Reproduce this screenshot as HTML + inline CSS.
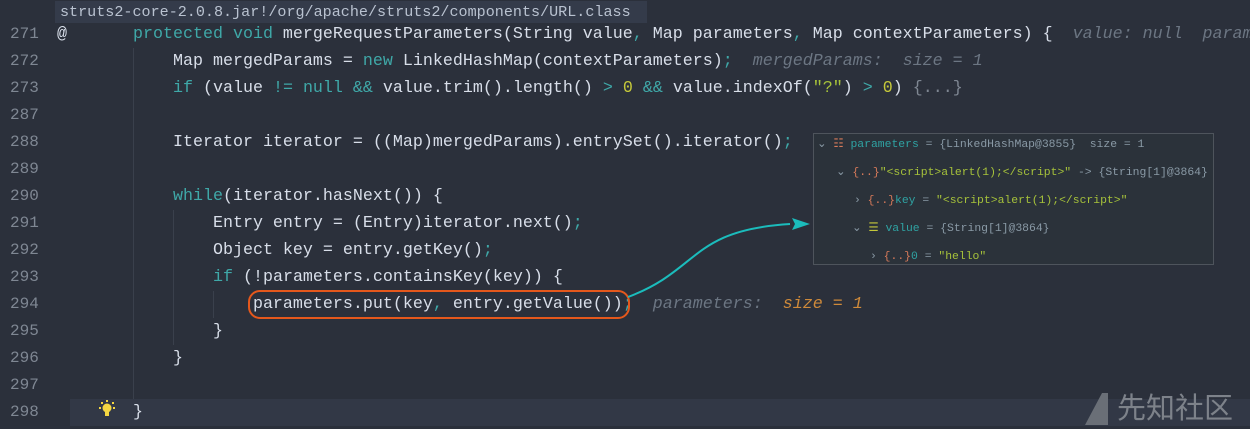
<!DOCTYPE html><html><head><style>
body{margin:0;width:1250px;height:429px;background:#2b303b;overflow:hidden;position:relative;font-family:"Liberation Mono",monospace;}
.hdr{position:absolute;left:55px;top:1px;width:587px;height:22px;background:#343b4a;color:#b9c2d0;font-size:15.1px;line-height:22px;padding-left:5px;white-space:nowrap}
.r{position:absolute;left:0;height:27px;line-height:27px;font-size:16.67px;color:#d8dee9;white-space:pre;width:1250px}
.n{position:absolute;left:10px;color:#7f8793;font-size:16px}
.c{position:absolute;left:133px}
.k{color:#3fa8a8}.num{color:#c5c83a}.s{color:#a6c23a}.h{color:#6c7683;font-style:italic}.o{color:#cf8a3a;font-style:italic}.d{color:#7f8793}
.dbg{position:absolute;left:813px;top:133px;width:399px;height:130px;background:#2b323a;border:1px solid #4e545c;font-size:11.4px;color:#8a9aa6}
.dr{position:absolute;white-space:pre;line-height:16px}
.t{color:#2fa3a3}.st{color:#a6c23a}.ic{color:#d77a5a}
</style></head><body>
<div class="r" style="top:399px;left:70px;background:#323846;width:1180px"></div>
<div class="hdr">struts2-core-2.0.8.jar!/org/apache/struts2/components/URL.class</div>
<div style="position:absolute;left:133px;top:48px;width:1px;height:351px;background:#3a404c"></div>
<div style="position:absolute;left:173px;top:210px;width:1px;height:135px;background:#3a404c"></div>
<div style="position:absolute;left:213px;top:291px;width:1px;height:27px;background:#3a404c"></div>

<div class="r" style="top:21px"><span class="n">271</span><span style="position:absolute;left:57px">@</span><span class="c"><span class="k">protected void</span> mergeRequestParameters(String value<span class="k">,</span> Map parameters<span class="k">,</span> Map contextParameters) {  <span class="h">value: null  param</span></span></div>
<div class="r" style="top:48px"><span class="n">272</span><span class="c">    Map mergedParams = <span class="k">new</span> LinkedHashMap(contextParameters)<span class="k">;</span>  <span class="h">mergedParams:  size = 1</span></span></div>
<div class="r" style="top:75px"><span class="n">273</span><span class="c">    <span class="k">if</span> (value <span class="k">!= null &amp;&amp;</span> value.trim().length() <span class="k">&gt;</span> <span class="num">0</span> <span class="k">&amp;&amp;</span> value.indexOf(<span class="s">"?"</span>) <span class="k">&gt;</span> <span class="num">0</span>) <span class="d">{...}</span></span></div>
<div class="r" style="top:102px"><span class="n">287</span></div>
<div class="r" style="top:129px"><span class="n">288</span><span class="c">    Iterator iterator = ((Map)mergedParams).entrySet().iterator()<span class="k">;</span></span></div>
<div class="r" style="top:156px"><span class="n">289</span></div>
<div class="r" style="top:183px"><span class="n">290</span><span class="c">    <span class="k">while</span>(iterator.hasNext()) {</span></div>
<div class="r" style="top:210px"><span class="n">291</span><span class="c">        Entry entry = (Entry)iterator.next()<span class="k">;</span></span></div>
<div class="r" style="top:237px"><span class="n">292</span><span class="c">        Object key = entry.getKey()<span class="k">;</span></span></div>
<div class="r" style="top:264px"><span class="n">293</span><span class="c">        <span class="k">if</span> (!parameters.containsKey(key)) {</span></div>
<div class="r" style="top:291px"><span class="n">294</span><span class="c">            parameters.put(key<span class="k">,</span> entry.getValue())<span class="k">;</span>  <span class="h">parameters:  </span><span class="o">size = 1</span></span></div>
<div class="r" style="top:318px"><span class="n">295</span><span class="c">        }</span></div>
<div class="r" style="top:345px"><span class="n">296</span><span class="c">    }</span></div>
<div class="r" style="top:372px"><span class="n">297</span></div>
<div class="r" style="top:399px"><span class="n">298</span><span class="c">}</span></div>
<div style="position:absolute;left:248px;top:290px;width:378px;height:25px;border:2px solid #e5581c;border-radius:12px"></div>
<svg style="position:absolute;left:0;top:0" width="1250" height="429"><path d="M628 297 C700 270,690 230,790 224" stroke="#1bbcbc" stroke-width="2" fill="none"/><polygon points="810,224 792,218 795,224 792,230" fill="#1bbcbc"/>
<g fill="#f5d742"><circle cx="107" cy="408" r="4.5"/><rect x="105" y="412" width="4" height="4"/><rect x="99" y="407" width="2" height="2"/><rect x="113" y="407" width="2" height="2"/><rect x="106" y="400" width="2" height="2"/><rect x="101" y="402" width="2" height="2"/><rect x="112" y="402" width="2" height="2"/></g>
<polygon points="1085,425 1102,393 1108,393 1108,425" fill="#6a6f77"/>
<text x="1117" y="418" font-family="Noto Sans CJK SC,sans-serif" font-size="29" fill="#7d828a">先知社区</text></svg>
<div class="dbg">
<div class="dr" style="left:3px;top:3px">⌄ <span class="ic">☷</span> <span class="t">parameters</span> = {LinkedHashMap@3855}  size = 1</div>
<div class="dr" style="left:22px;top:31px">⌄ <span class="ic">{..}</span><span class="st">"&lt;script&gt;alert(1);&lt;/script&gt;"</span> -&gt; {String[1]@3864}</div>
<div class="dr" style="left:40px;top:59px">› <span class="ic">{..}</span><span class="t">key</span> = <span class="st">"&lt;script&gt;alert(1);&lt;/script&gt;"</span></div>
<div class="dr" style="left:38px;top:87px">⌄ <span style="color:#c5c83a">☰</span> <span class="t">value</span> = {String[1]@3864}</div>
<div class="dr" style="left:56px;top:115px">› <span class="ic">{..}</span><span class="t">0</span> = <span class="st">"hello"</span></div>
</div>
</body></html>
